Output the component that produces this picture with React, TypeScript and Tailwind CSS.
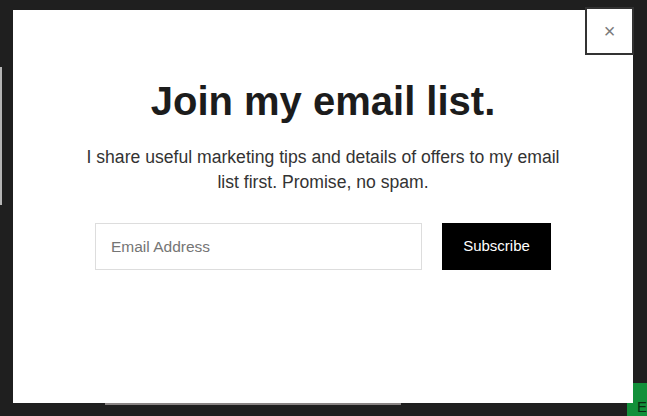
import React from "react";

const App: React.FC = () => {
  return (
    <div
      className="relative h-[416px] w-[647px] overflow-hidden bg-[#1f1f1f]"
      style={{ fontFamily: '"Liberation Sans", Arial, sans-serif' }}
    >
      {/* page behind the popup */}
      <div className="absolute left-0 top-[67px] h-[138px] w-[2px] bg-[#b5b5b5]" />
      <div className="absolute left-[105px] top-[403px] h-[2px] w-[296px] bg-[#8a8585]" />
      <div className="absolute left-[627px] top-[383px] flex h-[33px] w-[20px] items-end justify-end bg-[#12903a] pb-[2px]">
        <span className="text-[15px] leading-none text-[#0b2a12]">E</span>
      </div>

      {/* popup */}
      <div className="relative ml-[13px] mt-[10px] h-[393px] w-[620px] bg-white">
        <button className="absolute -top-[3px] right-[-1px] flex h-[48px] w-[49px] items-center justify-center border-2 border-[#333333] bg-white text-[20px] leading-none text-[#7a7a7a]">
          ×
        </button>

        <div className="flex flex-col items-center pt-[67px]">
          <h2 className="text-[40px] font-bold leading-[48px] text-[#1c1c1c]">
            Join my email list.
          </h2>
          <p className="mt-[20px] w-[490px] text-center text-[17.6px] leading-[25px] text-[#333333]">
            I share useful marketing tips and details of offers to my email list first. Promise, no spam.
          </p>
          <form className="mt-[28px] flex gap-[20px]" onSubmit={(e) => e.preventDefault()}>
            <input
              type="email"
              placeholder="Email Address"
              className="h-[47px] w-[327px] border border-[#dddddd] px-[15px] text-[15.5px] text-[#333333] outline-none placeholder:text-[#757575]"
            />
            <button className="h-[47px] w-[109px] bg-black text-[15px] text-white">
              Subscribe
            </button>
          </form>
        </div>
      </div>
    </div>
  );
};

export default App;
